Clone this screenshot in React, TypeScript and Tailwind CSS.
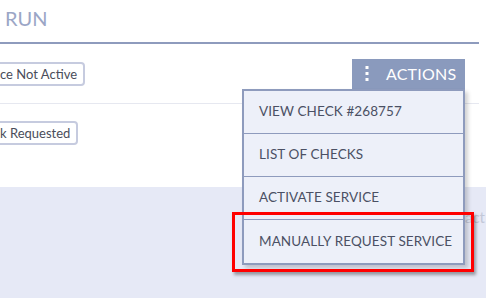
import React from "react";

const items = ["VIEW CHECK #268757", "LIST OF CHECKS", "ACTIVATE SERVICE", "MANUALLY REQUEST SERVICE"];

function Dots() {
  return (
    <svg width="4" height="15" viewBox="0 0 4 15" className="fill-white">
      <rect x="0.5" y="0" width="3" height="3" />
      <rect x="0.5" y="6" width="3" height="3" />
      <rect x="0.5" y="12" width="3" height="3" />
    </svg>
  );
}

function Badge({ label }: { label: string }) {
  return (
    <span className="-ml-[10px] rounded-[4px] border-2 border-[#c6cbdf] bg-white pl-[8px] pr-[6px] py-[1px] text-[13px] leading-[18px] text-[#4a4d5a]">
      {label}
    </span>
  );
}

export default function App() {
  return (
    <div className="relative h-[298px] w-[486px] overflow-hidden bg-white font-['Lato',sans-serif]">
      <div className="mr-[7px] h-[44px] border-b-2 border-[#8e9bbd] pl-[5px] pt-[5px] text-[20px] leading-[26px] text-[#9ba6c6]">
        RUN
      </div>

      <div className="mr-[7px] flex h-[60px] items-center justify-between border-b border-[#e6e8f0] pr-[14px]">
        <Badge label="ce Not Active" />
        <div className="relative">
          <button className="flex h-[30px] w-[113px] items-center gap-[17px] bg-[#8a9abd] pl-[13px] text-[16px] tracking-[0.2px] text-white">
            <Dots />
            ACTIONS
          </button>
          <div className="absolute right-0 top-full z-10 w-[223px] border-2 border-[#8e9bbd] bg-[#edf0f9] shadow-[3px_3px_4px_rgba(0,0,0,0.18)]">
            {items.map((label, i) => (
              <div
                key={label}
                className={`flex h-[43px] items-center pl-[15px] text-[13.5px] tracking-[0.1px] text-[#4b5064] ${i < items.length - 1 ? "border-b border-[#8e9bbd]" : ""}`}
              >
                {label}
              </div>
            ))}
            <div className="absolute left-[-12px] top-[121px] h-[60px] w-[242px] border-[3px] border-[#ff0000] shadow-[2px_3px_3px_rgba(0,0,0,0.35)]" />
          </div>
        </div>
      </div>

      <div className="flex h-[83px] items-start pt-[17px]">
        <Badge label="k Requested" />
      </div>

      <div className="flex h-[111px] justify-end bg-[#e6e9f6] pr-[1px] pt-[20px]">
        <span className="text-[15px] leading-[20px] text-[#c3c8d8]">Contact</span>
      </div>
    </div>
  );
}
